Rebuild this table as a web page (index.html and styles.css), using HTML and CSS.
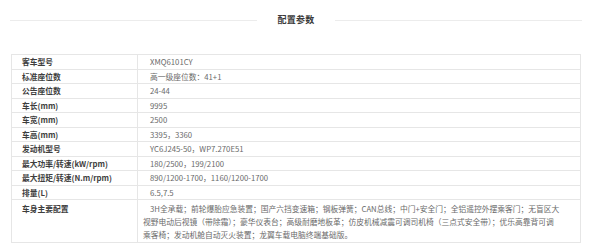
FILE: index.html
```html
<!DOCTYPE html>
<html lang="zh-CN">
<head>
<meta charset="utf-8">
<title>配置参数</title>
<link rel="stylesheet" href="styles.css">
</head>
<body>
<div class="page">
  <div class="heading">
    <span class="rule"></span>
    <h2 class="title">配置参数</h2>
    <span class="rule"></span>
  </div>
  <table class="spec">
    <tbody>
      <tr><th>客车型号</th><td>XMQ6101CY</td></tr>
      <tr><th>标准座位数</th><td>高一级座位数：41+1</td></tr>
      <tr><th>公告座位数</th><td>24-44</td></tr>
      <tr><th>车长(mm)</th><td>9995</td></tr>
      <tr><th>车宽(mm)</th><td>2500</td></tr>
      <tr><th>车高(mm)</th><td>3395，3360</td></tr>
      <tr><th>发动机型号</th><td>YC6J245-50，WP7.270E51</td></tr>
      <tr><th>最大功率/转速(kW/rpm)</th><td>180/2500，199/2100</td></tr>
      <tr><th>最大扭矩/转速(N.m/rpm)</th><td>890/1200-1700，1160/1200-1700</td></tr>
      <tr><th>排量(L)</th><td>6.5,7.5</td></tr>
      <tr class="long"><th>车身主要配置</th><td>3H全承载；前轮爆胎应急装置；国产六挡变速箱；钢板弹簧；CAN总线；中门+安全门；全铝遥控外摆乘客门；无盲区大<br>视野电动后视镜（带除霜）；豪华仪表台；高级耐磨地板革；仿皮机械减震可调司机椅（三点式安全带）；优乐高靠背可调<br>乘客椅；发动机舱自动灭火装置；龙翼车载电脑终端基础版。</td></tr>
    </tbody>
  </table>
</div>
</body>
</html>
```

FILE: styles.css
```css
html, body {
  margin: 0;
  padding: 0;
  background: #ffffff;
}

body {
  font-family: "Noto Sans CJK SC", "Microsoft YaHei", "Liberation Sans", sans-serif;
  color: #666666;
}

.page {
  width: 600px;
  height: 252px;
  overflow: hidden;
}

.heading {
  display: flex;
  align-items: center;
  gap: 21px;
  margin: 0 18px 0 10px;
  padding-top: 13px;
  height: 14px;
}

.rule {
  flex: 1;
  height: 1px;
  background: #ececec;
}

.title {
  margin: 0;
  font-size: 9px;
  line-height: 14px;
  font-weight: 700;
  color: #3a3a3a;
  letter-spacing: 0.2px;
}

.spec {
  margin: 27px 0 0 11px;
  width: 570px;
  border-collapse: collapse;
  table-layout: fixed;
  font-size: 7.75px;
  line-height: 13px;
}

.spec th,
.spec td {
  border: 1px solid #e6e6e6;
  padding: 0.25px 11px 0.25px 5px;
  vertical-align: top;
  text-align: left;
}

.spec th {
  width: 104px;
  padding-left: 10px;
  font-weight: 700;
  color: #3d3d3d;
}

.spec td {
  color: #6a6a6a;
  text-indent: 7px;
}

.spec .long th,
.spec .long td {
  padding-top: 1.5px;
  padding-bottom: 1.5px;
}
```
